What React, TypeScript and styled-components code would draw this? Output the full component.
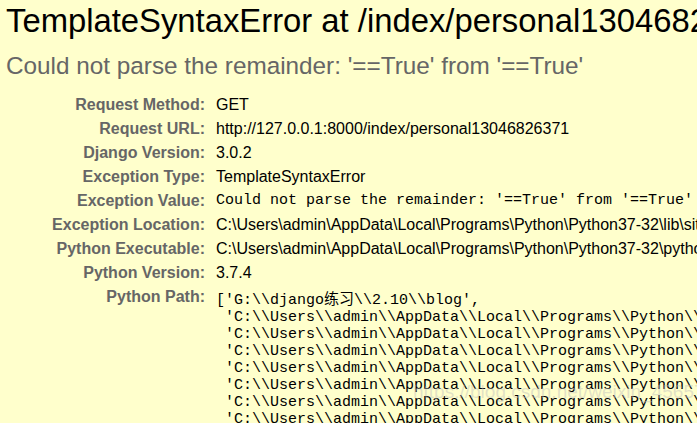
import styled, { createGlobalStyle } from 'styled-components';

const GlobalStyle = createGlobalStyle`
  html, body {
    margin: 0;
    padding: 0;
    background: #ffffcc;
    overflow: hidden;
  }
  body {
    font-family: "Liberation Sans", Arial, sans-serif;
    font-size: 16px;
    color: #000;
  }
`;

const Summary = styled.div`
  position: relative;
  background: #ffffcc;
  padding: 2px 0 0 6px;
  height: 423px;
  white-space: nowrap;
  overflow: hidden;
`;

const Title = styled.h1`
  margin: 0;
  font-size: 32.8px;
  font-weight: normal;
  line-height: 37px;
`;

const Subtitle = styled.h2`
  margin: 13px 0 13px 0;
  font-size: 24.3px;
  font-weight: normal;
  color: #666;
  line-height: 28px;
`;

const Meta = styled.div`
  display: grid;
  grid-template-columns: 199px auto;
  column-gap: 11px;
  align-items: start;
`;

const Label = styled.div`
  text-align: right;
  color: #666;
  font-weight: bold;
  line-height: 20px;
  padding: 2px 0;
`;

const Value = styled.div`
  line-height: 20px;
  padding: 2px 0;
`;

const Mono = styled.pre<{ $top?: number }>`
  margin: 0;
  padding-top: ${(p) => p.$top ?? 0}px;
  font-family: "Liberation Mono", "Courier New", "Noto Sans CJK SC", monospace;
  font-size: 15px;
  line-height: 17px;
  white-space: pre;
`;

const Watermark = styled.div`
  position: absolute;
  left: 413px;
  top: 381px;
  font-size: 19px;
  color: rgba(190, 190, 190, 0.45);
  pointer-events: none;
`;

const rows: [string, string][] = [
  ['Request Method:', 'GET'],
  ['Request URL:', 'http://127.0.0.1:8000/index/personal13046826371'],
  ['Django Version:', '3.0.2'],
  ['Exception Type:', 'TemplateSyntaxError'],
];

const rows2: [string, string][] = [
  ['Exception Location:', 'C:\\Users\\admin\\AppData\\Local\\Programs\\Python\\Python37-32\\lib\\site-packages\\django\\template\\base.py in __init__, line 662'],
  ['Python Executable:', 'C:\\Users\\admin\\AppData\\Local\\Programs\\Python\\Python37-32\\python.exe'],
  ['Python Version:', '3.7.4'],
];

const base = "'C:\\\\Users\\\\admin\\\\AppData\\\\Local\\\\Programs\\\\Python\\\\Python37-32";
const pythonPath = [
  "['G:\\\\django练习\\\\2.10\\\\blog',",
  ` ${base}\\\\python37.zip',`,
  ` ${base}\\\\DLLs',`,
  ` ${base}\\\\lib',`,
  ` ${base}',`,
  ` ${base}\\\\lib\\\\site-packages',`,
  ` ${base}\\\\lib\\\\site-packages\\\\win32',`,
  ` ${base}\\\\lib\\\\site-packages\\\\win32\\\\lib',`,
].join('\n');

export default function App() {
  return (
    <>
      <GlobalStyle />
      <Summary>
        <Title>TemplateSyntaxError at /index/personal13046826371</Title>
        <Subtitle>Could not parse the remainder: '==True' from '==True'</Subtitle>
        <Meta>
          {rows.map(([k, v]) => [
            <Label key={k + 'k'}>{k}</Label>,
            <Value key={k + 'v'}>{v}</Value>,
          ])}
          <Label>Exception Value:</Label>
          <Value>
            <Mono $top={1}>Could not parse the remainder: '==True' from '==True'</Mono>
          </Value>
          {rows2.map(([k, v]) => [
            <Label key={k + 'k'}>{k}</Label>,
            <Value key={k + 'v'}>{v}</Value>,
          ])}
          <Label>Python Path:</Label>
          <Value>
            <Mono $top={5}>{pythonPath}</Mono>
          </Value>
        </Meta>
        <Watermark>https://blog.csdn.net/weixin_45657035</Watermark>
      </Summary>
    </>
  );
}
